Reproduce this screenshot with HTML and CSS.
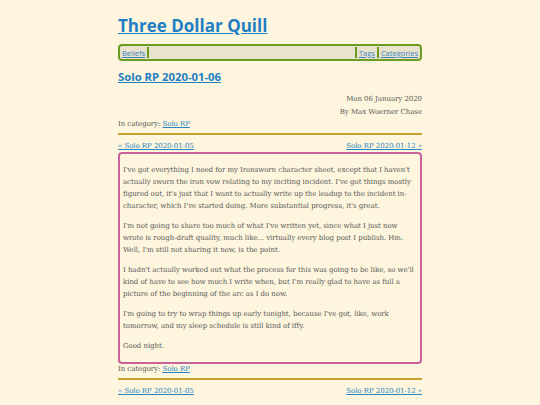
FILE: index.html
```html
<!DOCTYPE html>
<html>
<head>
<meta charset="utf-8">
<link rel="stylesheet" href="styles.css">
</head>
<body>
<div class="page">
  <h1 class="site-title"><a href="#">Three Dollar Quill</a></h1>
  <nav class="topnav">
    <a href="#">Beliefs</a>
    <span class="sep"></span>
    <span class="spacer"></span>
    <span class="sep"></span>
    <a href="#">Tags</a>
    <span class="sep"></span>
    <a href="#">Categories</a>
  </nav>
  <h2 class="post-title"><a href="#">Solo RP 2020-01-06</a></h2>
  <div class="meta">
    <div>Mon 06 January 2020</div>
    <div>By Max Woerner Chase</div>
  </div>
  <div class="cat">In category: <a href="#">Solo RP</a></div>
  <hr class="rule">
  <div class="pager"><a href="#">« Solo RP 2020-01-05</a><a href="#">Solo RP 2020-01-12 »</a></div>
  <article class="content">
    <p>I've got everything I need for my Ironsworn character sheet, except that I haven't actually sworn the iron vow relating to my inciting incident. I've got things mostly figured out, it's just that I want to actually write up the leadup to the incident in-character, which I've started doing. More substantial progress, it's great.</p>
    <p>I'm not going to share too much of what I've written yet, since what I just now wrote is rough-draft quality, much like... virtually every blog post I publish. Hm. Well, I'm still not sharing it now, is the point.</p>
    <p>I hadn't actually worked out what the process for this was going to be like, so we'll kind of have to see how much I write when, but I'm really glad to have as full a picture of the beginning of the arc as I do now.</p>
    <p>I'm going to try to wrap things up early tonight, because I've got, like, work tomorrow, and my sleep schedule is still kind of iffy.</p>
    <p>Good night.</p>
  </article>
  <div class="cat cat-after">In category: <a href="#">Solo RP</a></div>
  <hr class="rule">
  <div class="pager"><a href="#">« Solo RP 2020-01-05</a><a href="#">Solo RP 2020-01-12 »</a></div>
</div>
</body>
</html>
```
FILE: styles.css
```css
html, body {
  margin: 0;
  padding: 0;
  background: #fdf5dd;
}
body {
  font-family: "DejaVu Serif", serif;
  color: #595959;
  font-size: 7px;
  letter-spacing: -0.05px;
}
.page {
  width: 304px;
  margin: 0 auto;
  padding-top: 14px;
}
a { color: #2a86c4; }
.site-title {
  margin: 0;
  font-family: "Open Sans", sans-serif;
  font-weight: 700;
  font-size: 17px;
  line-height: 24px;
  letter-spacing: 0;
}
.site-title a { color: #1f7fc4; }
.topnav {
  margin-top: 6px;
  display: flex;
  align-items: center;
  height: 13px;
  border: 2px solid #6c9b22;
  border-radius: 4px;
  background: #e9e3cd;
  font-family: "Open Sans", sans-serif;
  font-size: 7.5px;
  letter-spacing: 0;
  padding: 0 2px;
}
.topnav a { color: #3a86c0; }
.topnav .sep {
  width: 2px;
  height: 11px;
  background: #6c9b22;
  margin: 0 2px;
}
.topnav .spacer { flex: 1; }
.post-title {
  margin: 8px 0 0;
  font-family: "Open Sans", sans-serif;
  font-weight: 700;
  font-size: 11.3px;
  line-height: 16px;
  letter-spacing: 0;
}
.post-title a { color: #1f7fc4; }
.meta {
  text-align: right;
  margin-top: 8px;
  line-height: 13px;
}
.cat { line-height: 11px; }
.rule {
  border: 0;
  height: 2px;
  background: #c9a133;
  margin: 3px 0 5px;
}
.pager {
  display: flex;
  justify-content: space-between;
  line-height: 12px;
}
.content {
  border: 2px solid #c9629b;
  border-radius: 4px;
  padding: 4px 3px 2px;
  margin: 0;
}
.content p {
  margin: 6px 0 8px;
  line-height: 12px;
}
.cat-after { margin-top: 0; }
```
